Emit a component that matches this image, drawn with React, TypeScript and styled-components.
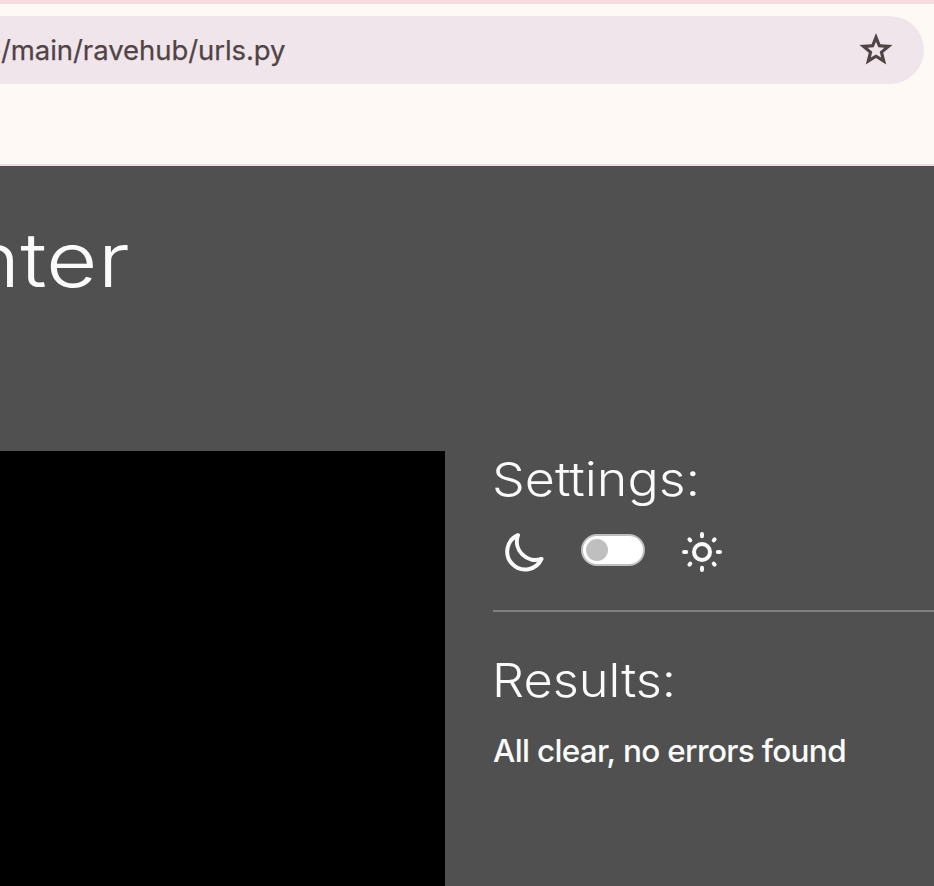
import React from "react";
import styled, { createGlobalStyle } from "styled-components";

const GlobalStyle = createGlobalStyle`
  * { box-sizing: border-box; }
  html, body { margin: 0; overflow: hidden; }
  body { background: #505050; color: #fafafa; font-family: Inter, "Liberation Sans", sans-serif; }
`;

const Page = styled.div`
  width: 934px;
  height: 886px;
  display: flex;
  flex-direction: column;
  overflow: hidden;
`;

const BrowserBar = styled.header`
  flex: none;
  height: 166px;
  padding-top: 12px;
  background: #fff9f6;
  border-top: 4px solid #fadae1;
  border-bottom: 2px solid #efdde0;
`;

const AddressBar = styled.div`
  display: flex;
  align-items: center;
  justify-content: space-between;
  width: 924px;
  height: 68px;
  padding-right: 28px;
  border-radius: 0 34px 34px 0;
  background: #f0e5eb;
  color: #504446;
`;

const Url = styled.span`
  margin-left: -15px;
  font-family: Inter, sans-serif;
  font-size: 27.5px;
  font-weight: 400;
  line-height: 34px;
  letter-spacing: -0.06px;
  white-space: nowrap;
  -webkit-text-stroke: 0.25px currentColor;
`;

const Content = styled.main`
  flex: 1;
  display: flex;
  flex-direction: column;
`;

const Hero = styled.div`
  flex: none;
  height: 285px;
  padding-top: 45px;
`;

const Title = styled.h1`
  width: max-content;
  margin: 0 0 0 -32px;
  font-size: 76px;
  font-weight: 300;
  line-height: 96px;
  white-space: nowrap;
  transform: scaleX(1.17);
  transform-origin: left;
`;

const Workspace = styled.div`
  flex: 1;
  display: grid;
  grid-template-columns: 445px 1fr;
`;

const Editor = styled.section`
  background: #000;
`;

const Sidebar = styled.aside`
  padding-left: 48px;
`;

const Heading = styled.h2<{ $stretch: number }>`
  width: max-content;
  margin: 0 0 0 -1px;
  font-size: 47px;
  font-weight: 300;
  line-height: 55px;
  white-space: nowrap;
  transform: scaleX(${(p) => p.$stretch});
  transform-origin: left;
`;

const ThemeRow = styled.div`
  display: flex;
  height: 104px;
  padding: 26px 0 0 11px;
`;

const Toggle = styled.div`
  display: flex;
  align-items: center;
  width: 64px;
  height: 32px;
  margin: 2px 37px 0;
  padding-left: 3px;
  border: 2px solid #bfbfbf;
  border-radius: 16px;
  background: #fff;
`;

const Knob = styled.span`
  width: 22px;
  height: 22px;
  border-radius: 50%;
  background: #bfbfbf;
`;

const Results = styled.div`
  padding-top: 40px;
  border-top: 2px solid #808080;
`;

const Message = styled.p`
  margin: 24px 0 0;
  font-size: 31.5px;
  font-weight: 500;
  line-height: 40px;
  letter-spacing: -0.67px;
  white-space: nowrap;
`;

const Icon = styled.svg`
  display: block;
  flex: none;
`;

const starPoints = (outer: number, inner: number) =>
  Array.from({ length: 10 }, (_, i) => {
    const r = i % 2 ? inner : outer;
    const a = (-90 + i * 36) * (Math.PI / 180);
    return `${i ? "L" : "M"}${20 + r * Math.cos(a)} ${20.5 + r * Math.sin(a)}`;
  }).join("") + "Z";

const Star = () => (
  <Icon width="40" height="40" viewBox="0 0 40 40">
    <path fill="currentColor" fillRule="evenodd" d={starPoints(17.4, 7.6) + starPoints(8.8, 3.9)} />
  </Icon>
);

const Moon = () => (
  <Icon width="40" height="40" viewBox="0 0 40 40">
    <path
      d="M14 3.2A17.9 17.9 0 1 0 37.5 26.9A18.5 18.5 0 0 1 14 3.2Z"
      fill="none"
      stroke="currentColor"
      strokeWidth="4"
      strokeLinejoin="round"
    />
  </Icon>
);

const Sun = () => (
  <Icon width="40" height="40" viewBox="0 0 40 40" fill="none" stroke="currentColor" strokeWidth="4" strokeLinecap="round">
    <circle cx="20" cy="20" r="8" />
    <path d="M20 2v2.2M20 35.8V38M2 20h2.2M35.8 20H38M7.4 7.4l.9.9M31.7 31.7l.9.9M32.6 7.4l-.9.9M8.3 31.7l-.9.9" />
  </Icon>
);

export default function App() {
  return (
    <Page>
      <GlobalStyle />
      <BrowserBar>
        <AddressBar>
          <Url>e/main/ravehub/urls.py</Url>
          <Star />
        </AddressBar>
      </BrowserBar>
      <Content>
        <Hero>
          <Title>nter</Title>
        </Hero>
        <Workspace>
          <Editor />
          <Sidebar>
            <Heading $stretch={1.105}>Settings:</Heading>
            <ThemeRow>
              <Moon />
              <Toggle role="switch" aria-checked={false}>
                <Knob />
              </Toggle>
              <Sun />
            </ThemeRow>
            <Results>
              <Heading $stretch={1.075}>Results:</Heading>
              <Message>All clear, no errors found</Message>
            </Results>
          </Sidebar>
        </Workspace>
      </Content>
    </Page>
  );
}
